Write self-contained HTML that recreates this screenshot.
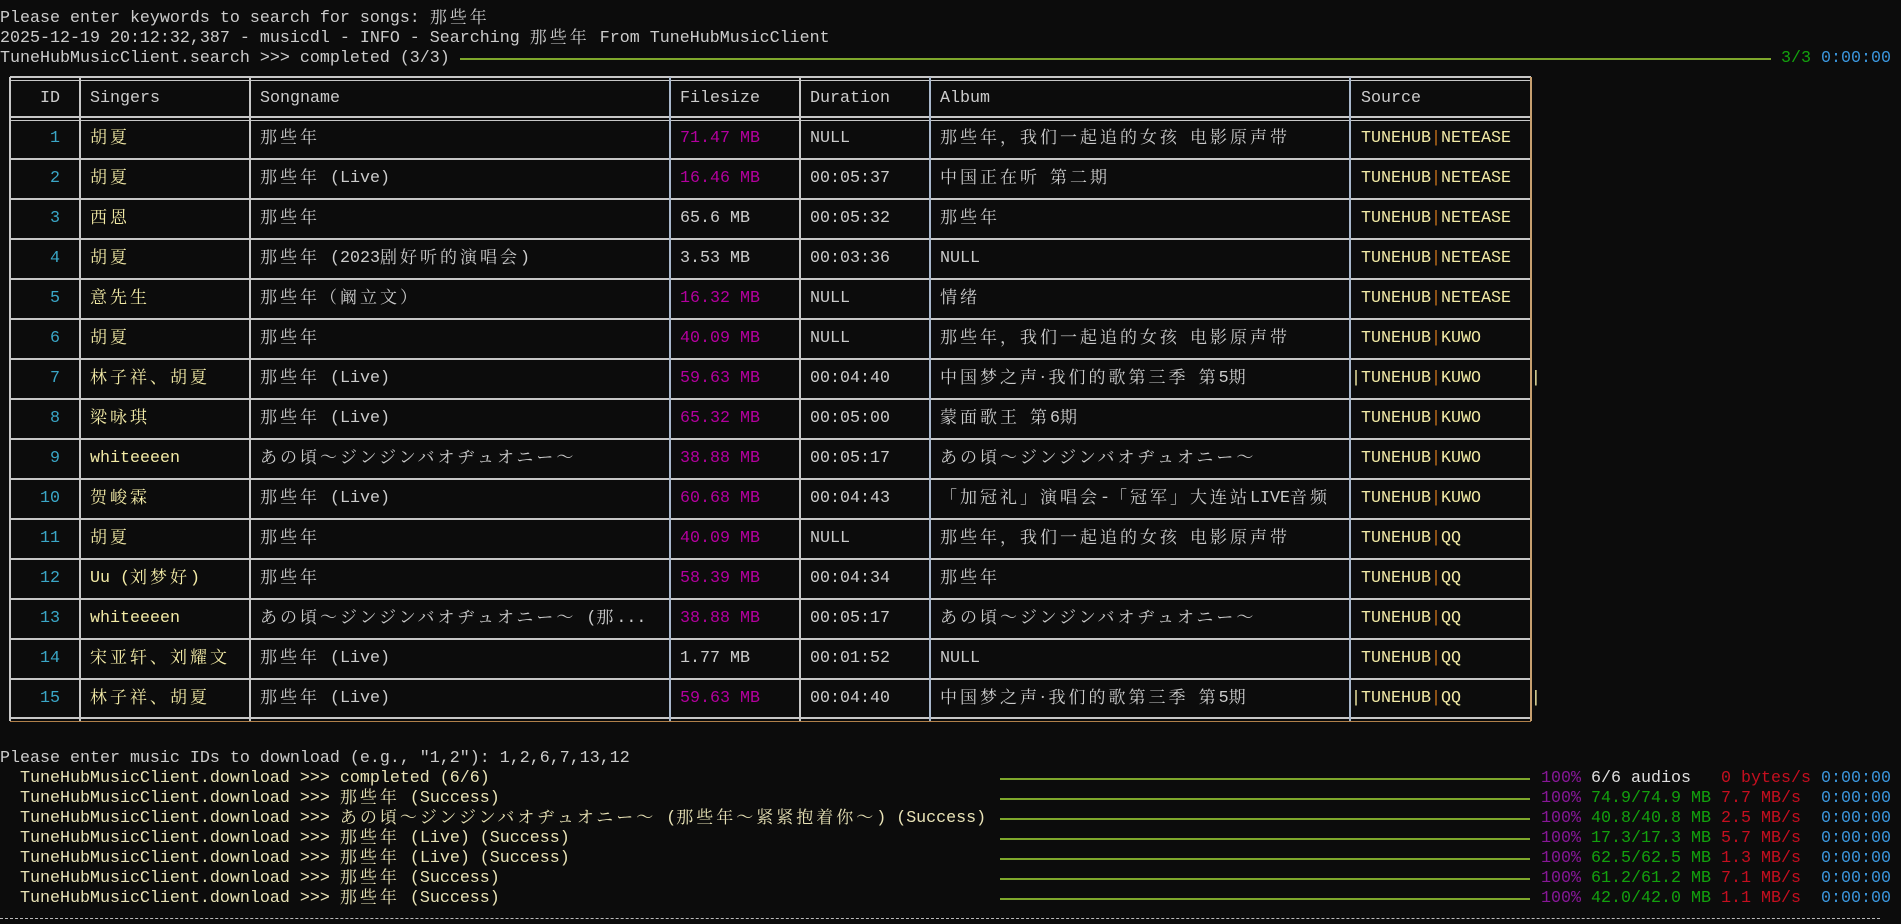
<!DOCTYPE html>
<html><head><meta charset="utf-8">
<style>
html,body{margin:0;padding:0;background:#0c0c0c;}
body{width:1901px;height:924px;overflow:hidden;position:relative;font-family:"Liberation Mono","Noto Serif CJK SC",monospace;font-size:16.67px;line-height:20px;color:#cccccc;}
.l{position:absolute;white-space:pre;height:20px;}
.c{display:inline-block;position:relative;top:-3px;height:20px;line-height:20px;vertical-align:top;overflow:visible;font-family:"Noto Serif CJK SC","Noto Sans CJK SC",serif;font-size:17px;letter-spacing:3px;font-weight:normal;}
.bar{position:absolute;height:2px;background:#7fa82c;}
.hl{position:absolute;left:10px;width:1521px;height:2px;background:#c8c8c8;}
.vl{position:absolute;top:77px;height:644px;width:2px;background:#c8c8c8;}
.r{position:absolute;left:0;width:1901px;height:20px;}
.r span{position:absolute;white-space:pre;top:0;height:20px;}
.i{left:10px;width:50px;text-align:right;color:#3aa6c6;}
.s{left:90px;color:#f3eba6;}
.n{left:260px;}
.f{left:680px;}
.d{left:810px;}
.a{left:940px;}
.o{left:1361px;color:#f3eba6;}
.m{color:#b4009e;}
.or{color:#c8731a;font-weight:normal;}
.y{color:#e9e3b6;}
.pu{color:#881798;}
.gr{color:#13a10e;}
.rd{color:#c50f1f;}
.bl{color:#3a96dd;}
.wh{color:#e0e0e0;}
</style></head><body>

<div class="l" style="top:9px;left:0">Please enter keywords to search for songs: <b class="c">那些年</b></div>
<div class="l" style="top:29px;left:0">2025-12-19 20:12:32,387 - musicdl - INFO - Searching <b class="c">那些年</b> From TuneHubMusicClient</div>
<div class="l" style="top:49px;left:0">TuneHubMusicClient.search &gt;&gt;&gt; completed (3/3)</div>
<div class="bar" style="top:58px;left:460px;width:1311px"></div>
<div class="l gr" style="top:49px;left:1781px">3/3</div>
<div class="l bl" style="top:49px;left:1821px">0:00:00</div>

<div class="hl" style="top:76px"></div>
<div class="hl" style="top:80px;height:1px"></div>
<div class="hl" style="top:116px"></div>
<div class="hl" style="top:120px;height:1px"></div>
<div class="hl" style="top:158px"></div>
<div class="hl" style="top:198px"></div>
<div class="hl" style="top:238px"></div>
<div class="hl" style="top:278px"></div>
<div class="hl" style="top:318px"></div>
<div class="hl" style="top:358px"></div>
<div class="hl" style="top:398px"></div>
<div class="hl" style="top:438px"></div>
<div class="hl" style="top:478px"></div>
<div class="hl" style="top:518px"></div>
<div class="hl" style="top:558px"></div>
<div class="hl" style="top:598px"></div>
<div class="hl" style="top:638px"></div>
<div class="hl" style="top:678px"></div>
<div class="hl" style="top:717px"></div>
<div class="hl" style="top:721px;height:1px;background:#b0804a"></div>
<div class="vl" style="left:9px"></div>
<div class="vl" style="left:79px"></div>
<div class="vl" style="left:249px"></div>
<div class="vl" style="left:669px;background:#a9b8cc"></div>
<div class="vl" style="left:799px"></div>
<div class="vl" style="left:929px;background:#a9b8cc"></div>
<div class="vl" style="left:1349px;background:#a9b8cc"></div>
<div class="vl" style="left:1530px;background:#c8a070"></div>

<div class="r" style="top:89px"><span class="i" style="color:#cccccc">ID</span><span class="s" style="color:#cccccc">Singers</span><span class="n">Songname</span><span class="f">Filesize</span><span class="d">Duration</span><span class="a">Album</span><span class="o" style="color:#cccccc">Source</span></div>

<div class="r" style="top:129px"><span class="i">1</span><span class="s"><b class="c">胡夏</b></span><span class="n"><b class="c">那些年</b></span><span class="f m">71.47 MB</span><span class="d">NULL</span><span class="a"><b class="c">那些年，我们一起追的女孩</b> <b class="c">电影原声带</b></span><span class="o">TUNEHUB<b class="or">|</b>NETEASE</span></div>
<div class="r" style="top:169px"><span class="i">2</span><span class="s"><b class="c">胡夏</b></span><span class="n"><b class="c">那些年</b> (Live)</span><span class="f m">16.46 MB</span><span class="d">00:05:37</span><span class="a"><b class="c">中国正在听</b> <b class="c">第二期</b></span><span class="o">TUNEHUB<b class="or">|</b>NETEASE</span></div>
<div class="r" style="top:209px"><span class="i">3</span><span class="s"><b class="c">西恩</b></span><span class="n"><b class="c">那些年</b></span><span class="f">65.6 MB</span><span class="d">00:05:32</span><span class="a"><b class="c">那些年</b></span><span class="o">TUNEHUB<b class="or">|</b>NETEASE</span></div>
<div class="r" style="top:249px"><span class="i">4</span><span class="s"><b class="c">胡夏</b></span><span class="n"><b class="c">那些年</b> (2023<b class="c">剧好听的演唱会</b>)</span><span class="f">3.53 MB</span><span class="d">00:03:36</span><span class="a">NULL</span><span class="o">TUNEHUB<b class="or">|</b>NETEASE</span></div>
<div class="r" style="top:289px"><span class="i">5</span><span class="s"><b class="c">意先生</b></span><span class="n"><b class="c">那些年（阚立文）</b></span><span class="f m">16.32 MB</span><span class="d">NULL</span><span class="a"><b class="c">情绪</b></span><span class="o">TUNEHUB<b class="or">|</b>NETEASE</span></div>
<div class="r" style="top:329px"><span class="i">6</span><span class="s"><b class="c">胡夏</b></span><span class="n"><b class="c">那些年</b></span><span class="f m">40.09 MB</span><span class="d">NULL</span><span class="a"><b class="c">那些年，我们一起追的女孩</b> <b class="c">电影原声带</b></span><span class="o">TUNEHUB<b class="or">|</b>KUWO</span></div>
<div class="r" style="top:369px"><span class="i">7</span><span class="s"><b class="c">林子祥、胡夏</b></span><span class="n"><b class="c">那些年</b> (Live)</span><span class="f m">59.63 MB</span><span class="d">00:04:40</span><span class="a"><b class="c">中国梦之声·我们的歌第三季</b> <b class="c">第</b>5<b class="c">期</b></span><span class="o" style="left:1351px">|TUNEHUB<b class="or">|</b>KUWO     |</span></div>
<div class="r" style="top:409px"><span class="i">8</span><span class="s"><b class="c">梁咏琪</b></span><span class="n"><b class="c">那些年</b> (Live)</span><span class="f m">65.32 MB</span><span class="d">00:05:00</span><span class="a"><b class="c">蒙面歌王</b> <b class="c">第</b>6<b class="c">期</b></span><span class="o">TUNEHUB<b class="or">|</b>KUWO</span></div>
<div class="r" style="top:449px"><span class="i">9</span><span class="s">whiteeeen</span><span class="n"><b class="c">あの頃～ジンジンバオヂュオニー～</b></span><span class="f m">38.88 MB</span><span class="d">00:05:17</span><span class="a"><b class="c">あの頃～ジンジンバオヂュオニー～</b></span><span class="o">TUNEHUB<b class="or">|</b>KUWO</span></div>
<div class="r" style="top:489px"><span class="i">10</span><span class="s"><b class="c">贺峻霖</b></span><span class="n"><b class="c">那些年</b> (Live)</span><span class="f m">60.68 MB</span><span class="d">00:04:43</span><span class="a"><b class="c">「加冠礼」演唱会</b>-<b class="c">「冠军」大连站</b>LIVE<b class="c">音频</b></span><span class="o">TUNEHUB<b class="or">|</b>KUWO</span></div>
<div class="r" style="top:529px"><span class="i">11</span><span class="s"><b class="c">胡夏</b></span><span class="n"><b class="c">那些年</b></span><span class="f m">40.09 MB</span><span class="d">NULL</span><span class="a"><b class="c">那些年，我们一起追的女孩</b> <b class="c">电影原声带</b></span><span class="o">TUNEHUB<b class="or">|</b>QQ</span></div>
<div class="r" style="top:569px"><span class="i">12</span><span class="s">Uu (<b class="c">刘梦好</b>)</span><span class="n"><b class="c">那些年</b></span><span class="f m">58.39 MB</span><span class="d">00:04:34</span><span class="a"><b class="c">那些年</b></span><span class="o">TUNEHUB<b class="or">|</b>QQ</span></div>
<div class="r" style="top:609px"><span class="i">13</span><span class="s">whiteeeen</span><span class="n"><b class="c">あの頃～ジンジンバオヂュオニー～</b> (<b class="c">那</b>...</span><span class="f m">38.88 MB</span><span class="d">00:05:17</span><span class="a"><b class="c">あの頃～ジンジンバオヂュオニー～</b></span><span class="o">TUNEHUB<b class="or">|</b>QQ</span></div>
<div class="r" style="top:649px"><span class="i">14</span><span class="s"><b class="c">宋亚轩、刘耀文</b></span><span class="n"><b class="c">那些年</b> (Live)</span><span class="f">1.77 MB</span><span class="d">00:01:52</span><span class="a">NULL</span><span class="o">TUNEHUB<b class="or">|</b>QQ</span></div>
<div class="r" style="top:689px"><span class="i">15</span><span class="s"><b class="c">林子祥、胡夏</b></span><span class="n"><b class="c">那些年</b> (Live)</span><span class="f m">59.63 MB</span><span class="d">00:04:40</span><span class="a"><b class="c">中国梦之声·我们的歌第三季</b> <b class="c">第</b>5<b class="c">期</b></span><span class="o" style="left:1351px">|TUNEHUB<b class="or">|</b>QQ       |</span></div>

<div class="l" style="top:749px;left:0">Please enter music IDs to download (e.g., "1,2"): 1,2,6,7,13,12</div>
<div class="l y" style="top:769px;left:0">  TuneHubMusicClient.download &gt;&gt;&gt; completed (6/6)</div>
<div class="l y" style="top:789px;left:0">  TuneHubMusicClient.download &gt;&gt;&gt; <b class="c">那些年</b> (Success)</div>
<div class="l y" style="top:809px;left:0">  TuneHubMusicClient.download &gt;&gt;&gt; <b class="c">あの頃～ジンジンバオヂュオニー～</b> (<b class="c">那些年～紧紧抱着你～</b>) (Success)</div>
<div class="l y" style="top:829px;left:0">  TuneHubMusicClient.download &gt;&gt;&gt; <b class="c">那些年</b> (Live) (Success)</div>
<div class="l y" style="top:849px;left:0">  TuneHubMusicClient.download &gt;&gt;&gt; <b class="c">那些年</b> (Live) (Success)</div>
<div class="l y" style="top:869px;left:0">  TuneHubMusicClient.download &gt;&gt;&gt; <b class="c">那些年</b> (Success)</div>
<div class="l y" style="top:889px;left:0">  TuneHubMusicClient.download &gt;&gt;&gt; <b class="c">那些年</b> (Success)</div>

<div class="bar" style="top:778px;left:1000px;width:530px"></div>
<div class="bar" style="top:798px;left:1000px;width:530px"></div>
<div class="bar" style="top:818px;left:1000px;width:530px"></div>
<div class="bar" style="top:838px;left:1000px;width:530px"></div>
<div class="bar" style="top:858px;left:1000px;width:530px"></div>
<div class="bar" style="top:878px;left:1000px;width:530px"></div>
<div class="bar" style="top:898px;left:1000px;width:530px"></div>

<div class="l pu" style="top:769px;left:1541px">100%</div><div class="l wh" style="top:769px;left:1591px">6/6 audios</div><div class="l rd" style="top:769px;left:1721px">0 bytes/s</div><div class="l bl" style="top:769px;left:1821px">0:00:00</div>
<div class="l pu" style="top:789px;left:1541px">100%</div><div class="l gr" style="top:789px;left:1591px">74.9/74.9 MB</div><div class="l rd" style="top:789px;left:1721px">7.7 MB/s</div><div class="l bl" style="top:789px;left:1821px">0:00:00</div>
<div class="l pu" style="top:809px;left:1541px">100%</div><div class="l gr" style="top:809px;left:1591px">40.8/40.8 MB</div><div class="l rd" style="top:809px;left:1721px">2.5 MB/s</div><div class="l bl" style="top:809px;left:1821px">0:00:00</div>
<div class="l pu" style="top:829px;left:1541px">100%</div><div class="l gr" style="top:829px;left:1591px">17.3/17.3 MB</div><div class="l rd" style="top:829px;left:1721px">5.7 MB/s</div><div class="l bl" style="top:829px;left:1821px">0:00:00</div>
<div class="l pu" style="top:849px;left:1541px">100%</div><div class="l gr" style="top:849px;left:1591px">62.5/62.5 MB</div><div class="l rd" style="top:849px;left:1721px">1.3 MB/s</div><div class="l bl" style="top:849px;left:1821px">0:00:00</div>
<div class="l pu" style="top:869px;left:1541px">100%</div><div class="l gr" style="top:869px;left:1591px">61.2/61.2 MB</div><div class="l rd" style="top:869px;left:1721px">7.1 MB/s</div><div class="l bl" style="top:869px;left:1821px">0:00:00</div>
<div class="l pu" style="top:889px;left:1541px">100%</div><div class="l gr" style="top:889px;left:1591px">42.0/42.0 MB</div><div class="l rd" style="top:889px;left:1721px">1.1 MB/s</div><div class="l bl" style="top:889px;left:1821px">0:00:00</div>

<div style="position:absolute;top:918px;left:0;width:1880px;border-top:1px dashed #bbbbbb"></div>
</body></html>
